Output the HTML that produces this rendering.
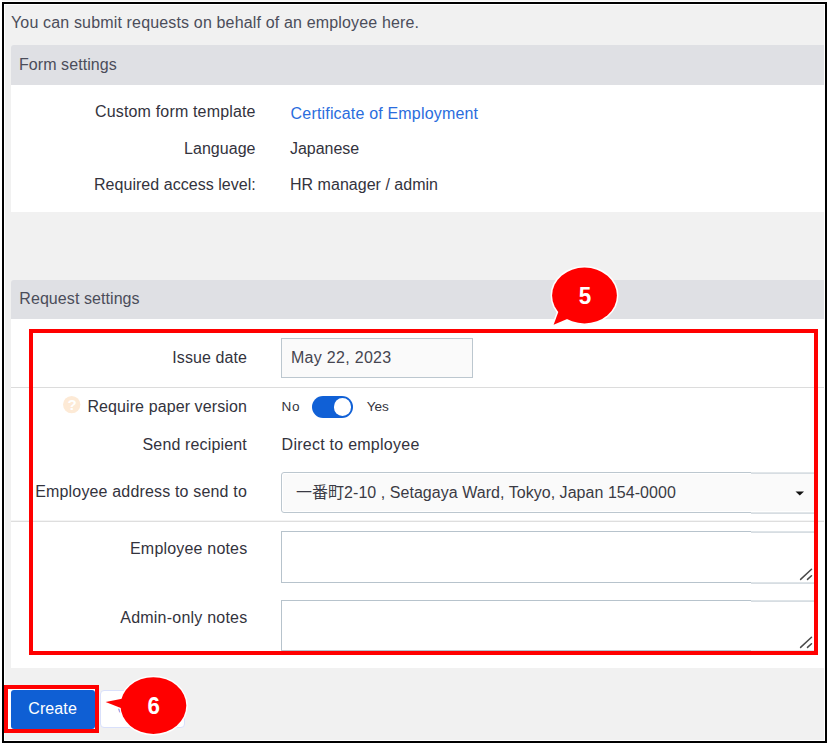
<!DOCTYPE html>
<html lang="en">
<head>
<meta charset="utf-8">
<title>Create request</title>
<style>
html,body{margin:0;padding:0;background:#fff;}
body{width:828px;height:744px;overflow:hidden;position:relative;
  font-family:"Liberation Sans","Noto Sans CJK JP",sans-serif;font-size:16px;color:#33333d;}
#frame{position:absolute;left:2px;top:2px;width:821px;height:737px;border:2px solid #000;box-shadow:inset 0 0 0 1px #fff;pointer-events:none;}
#page{position:absolute;left:4px;top:4px;width:821px;height:737px;background:#f1f1f1;overflow:hidden;}
.abs{position:absolute;}
.t{position:absolute;white-space:pre;line-height:20px;height:20px;}
.hdr{position:absolute;left:11px;width:814px;background:#dfe0e4;border-radius:3px 0 0 0;}
.panel{position:absolute;left:11px;width:814px;background:#fff;}
.hl{color:#4b4d5a;}
.sep{position:absolute;left:11px;width:814px;height:1px;background:#dcdcdc;}
.redbox{position:absolute;border:4px solid #ff0000;box-sizing:border-box;}
.field{position:absolute;box-sizing:border-box;border:1px solid #bcc7cf;background:#fafafa;}
.ta{background:#fff;border-color:#b7c3cc;}
.g0,.g1{position:absolute;left:751px;width:63px;height:1px;}
.g0{background:rgba(255,255,255,.55);}
.g1{background:rgba(188,199,207,.6);}
</style>
</head>
<body>
<div id="page"></div>

<!-- intro -->
<div class="t hl" style="left:11px;top:13px;letter-spacing:0.157px">You can submit requests on behalf of an employee here.</div>

<!-- Form settings -->
<div class="hdr" style="top:45px;height:40px"></div>
<div class="t hl" style="left:19px;top:55px;letter-spacing:0.065px">Form settings</div>
<div class="panel" style="top:85px;height:127px"></div>
<div class="t" style="left:95px;top:102px;letter-spacing:0.164px">Custom form template</div>
<div class="t" style="left:184px;top:139px;letter-spacing:0.045px">Language</div>
<div class="t" style="left:94px;top:175px;letter-spacing:0.04px">Required access level:</div>
<div class="t" style="left:290.6px;top:104px;letter-spacing:0.176px;color:#2a6ddd">Certificate of Employment</div>
<div class="t" style="left:290px;top:139px;letter-spacing:-0.027px">Japanese</div>
<div class="t" style="left:290px;top:175px;letter-spacing:0.022px">HR manager / admin</div>

<!-- Request settings -->
<div class="hdr" style="top:280px;height:39px"></div>
<div class="t hl" style="left:19.3px;top:289px;letter-spacing:0.074px">Request settings</div>
<div class="panel" style="top:319px;height:349px"></div>

<div class="t" style="left:172.3px;top:348px;letter-spacing:0.097px">Issue date</div>
<div class="field" style="left:281px;top:338px;width:192px;height:40px"></div>
<div class="t" style="left:291px;top:348px;letter-spacing:0.295px;color:#454550">May 22, 2023</div>
<div class="sep" style="top:387px"></div>

<svg class="abs" style="left:62px;top:395px" width="20" height="20" viewBox="0 0 20 20"><circle cx="9.7" cy="9.6" r="8.7" fill="#fdead6"/><text x="10" y="15.4" text-anchor="middle" font-family="Liberation Sans, sans-serif" font-weight="bold" font-size="15" fill="#fff">?</text></svg>
<div class="t" style="left:87.4px;top:397px;letter-spacing:0.099px">Require paper version</div>
<div class="t" style="left:281.6px;top:397px;font-size:13.6px;letter-spacing:0.709px">No</div>
<div class="abs" style="left:312px;top:396px;width:41px;height:22px;border-radius:11px;background:#1060d6"></div>
<div class="abs" style="left:334px;top:398px;width:17px;height:18px;border-radius:9px;background:#fff"></div>
<div class="t" style="left:366.8px;top:397px;font-size:13.6px;letter-spacing:-0.094px">Yes</div>

<div class="t" style="left:142.5px;top:435px;letter-spacing:0.154px">Send recipient</div>
<div class="t" style="left:281.6px;top:435px;letter-spacing:0.253px">Direct to employee</div>

<div class="t" style="left:35.2px;top:482px;letter-spacing:0.168px">Employee address to send to</div>
<div class="field" style="left:281px;top:472px;width:536px;height:41px;border-radius:3px;box-shadow:inset 0 0 0 1px #fff"></div>
<div class="t" style="left:296px;top:483px;letter-spacing:0.04px;color:#3a3a44">一番町2-10 , Setagaya Ward, Tokyo, Japan 154-0000</div>
<svg class="abs" style="left:794px;top:490px" width="12" height="7" viewBox="0 0 12 7"><path d="M1.5 1.4 L10 1.4 L5.75 5.5 Z" fill="#111"/></svg>
<div class="sep" style="top:520px;background:#f4f4f4"></div><div class="sep" style="top:521px;background:#dedede"></div>

<div class="t" style="left:130px;top:539px;letter-spacing:0.19px">Employee notes</div>
<div class="field ta" style="left:281px;top:531px;width:536px;height:52px"></div>
<svg class="abs" style="left:798px;top:567px" width="16" height="14" viewBox="0 0 16 14"><path d="M2.6 12.4 L13.5 2.2 M9.5 12.4 L13.5 8.8" stroke="#4a4a4a" stroke-width="1.5" fill="none" stroke-linecap="round"/></svg>

<div class="t" style="left:120.3px;top:608px;letter-spacing:0.218px">Admin-only notes</div>
<div class="field ta" style="left:281px;top:600px;width:536px;height:51px"></div>
<svg class="abs" style="left:798px;top:635px" width="16" height="14" viewBox="0 0 16 14"><path d="M2.6 12.4 L13.5 2.2 M9.5 12.4 L13.5 8.8" stroke="#4a4a4a" stroke-width="1.5" fill="none" stroke-linecap="round"/></svg>

<!-- capture seam: lines right of x=751 sit a fraction lower -->
<div class="g0" style="top:472px"></div><div class="g1" style="top:473px"></div><div class="g0" style="top:512px"></div><div class="g1" style="top:513px"></div><div class="g0" style="top:531px"></div><div class="g1" style="top:532px"></div><div class="g0" style="top:582px"></div><div class="g1" style="top:583px"></div><div class="g0" style="top:600px"></div><div class="g1" style="top:601px"></div><div class="g0" style="top:650px"></div><div class="g1" style="top:651px"></div>
<div id="frame"></div>
<div class="abs" style="left:2px;top:0;width:824px;height:1px;background:#f5f5f5"></div>

<!-- red highlight 5 -->
<div class="redbox" style="left:29px;top:329px;width:789px;height:326px"></div>

<!-- buttons -->
<div class="abs" style="left:8px;top:689px;width:87px;height:40px;background:#fff"></div>
<div class="abs" style="left:10.5px;top:689.5px;width:84.5px;height:39px;background:#0f5fd4;border-radius:3px"></div>
<div class="t" style="left:28.3px;top:699px;letter-spacing:0.094px;color:#fff">Create</div>
<div class="abs" style="left:100px;top:690px;width:85px;height:38px;box-sizing:border-box;border:1px solid #d9e0fb;border-radius:4px;background:#fff"></div>
<div class="t" style="left:117.6px;top:699px;letter-spacing:-0.263px;color:#2a6ddd">Cancel</div>
<div class="redbox" style="left:4px;top:685px;width:95px;height:48px"></div>

<!-- callouts -->
<svg class="abs" style="left:0;top:0" width="828" height="744" viewBox="0 0 828 744">
  <g stroke="#fff" stroke-width="3" stroke-linejoin="round">
    <ellipse cx="584.5" cy="295.5" rx="32.4" ry="28" fill="#ff0000"/>
    <path d="M553.6 324.7 L563.5 298 L579.6 313.8 Z" fill="#ff0000"/>
    <ellipse cx="153.4" cy="705.6" rx="32.9" ry="28.4" fill="#ff0000"/>
    <path d="M105.6 702 L143.4 694.4 L137.4 714.4 Z" fill="#ff0000"/>
  </g>
  <g fill="#ff0000">
    <ellipse cx="584.5" cy="295.5" rx="32.4" ry="28"/>
    <path d="M553.6 324.7 L563.5 298 L579.6 313.8 Z"/>
    <ellipse cx="153.4" cy="705.6" rx="32.9" ry="28.4"/>
    <path d="M105.6 702 L143.4 694.4 L137.4 714.4 Z"/>
  </g>
  <g font-family="Liberation Sans, sans-serif" font-weight="bold" font-size="24.6" fill="#fff" text-anchor="middle">
    <text transform="translate(585 303.8) scale(.91 1)">5</text>
    <text transform="translate(153.6 714) scale(.91 1)">6</text>
  </g>
</svg>
</body>
</html>
